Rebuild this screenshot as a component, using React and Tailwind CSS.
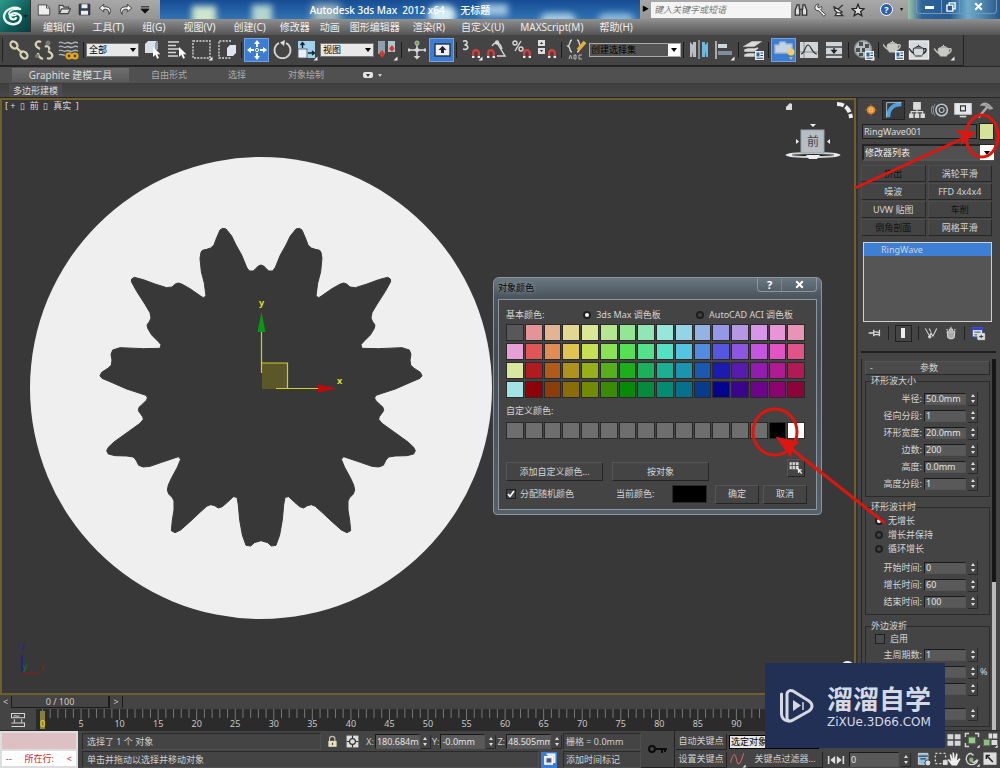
import { useState } from "react";

const rows = [
  ["#585858", "#e39497", "#e3b493", "#e3d794", "#d9e797", "#b5e692", "#92e695", "#92e6b5", "#96e6da", "#95d4e6", "#94b3e5", "#9698e7", "#b597e6", "#d796e7", "#e795d6", "#e695b4"],
  ["#e5a0d8", "#e05656", "#e08c54", "#e0c452", "#c5e153", "#8ae254", "#55e153", "#55e18a", "#56e1c5", "#54c4e2", "#548be2", "#5657e0", "#8c56e1", "#c455e0", "#e154c3", "#e1548a"],
  ["#d8e69f", "#b01b1f", "#b15b1b", "#ad921b", "#96b01b", "#57b01b", "#1bb01b", "#1bb05a", "#1bb094", "#1b94b0", "#1b58b0", "#1c1bb0", "#571bb0", "#931bb0", "#b01b93", "#b01b56"],
  ["#a0e4e4", "#8b0308", "#8b3e0a", "#8a6d08", "#708b05", "#3a8b05", "#058b05", "#058b3b", "#058b72", "#05718b", "#053c8b", "#05058b", "#38058b", "#6d058b", "#8b056f", "#8b0539"],
];

const custom = [...Array(14).fill("#6e6e6e"), "#000000", "#ffffff"];

// left half of the ring's inner outline, the right half is the mirror of it
const half = [
  [513,165],[505,168],[497,176],[490,183],[478,183],[470,172],[455,135],[438,105],[425,78],[408,57],[398,55],[390,60],[378,88],[372,105],[362,114],[350,118],[337,121],[333,127],[330,145],[334,185],[343,220],[348,258],[340,263],[333,259],[300,236],[275,222],[265,219],[256,222],[246,231],[230,233],[195,222],[160,209],[133,202],[125,207],[124,215],[140,244],[165,283],[180,308],[183,324],[178,335],[171,345],[173,355],[185,375],[205,395],[213,404],[210,415],[160,416],[90,413],[68,420],[63,433],[66,450],[64,465],[55,474],[35,487],[30,497],[36,505],[60,515],[110,537],[150,550],[168,556],[172,563],[170,570],[158,582],[147,592],[145,602],[152,612],[158,620],[160,628],[150,640],[115,665],[72,696],[55,712],[50,722],[55,732],[75,737],[110,738],[130,741],[138,750],[146,766],[160,771],[180,769],[215,757],[265,740],[272,748],[262,772],[245,803],[235,825],[232,840],[236,852],[247,863],[252,873],[252,900],[247,930],[244,962],[255,968],[272,960],[300,935],[330,907],[350,889],[362,884],[374,887],[385,894],[397,890],[412,877],[430,860],[441,862],[445,885],[449,930],[457,975],[468,1006],[482,1008],[493,998],[513,992],
];
const outline = [...half, ...half.slice().reverse().map(([x, y]) => [1026 - x, y])].map((p) => p.join(",")).join(" ");

const Svg = ({ children, size = 22, className = "" }) => (
  <svg width={size} height={size} viewBox="0 0 22 22" fill="none" stroke="#d6d6d6" strokeWidth="1.4" className={"shrink-0 " + className}>
    {children}
  </svg>
);

const Magnet = ({ x = 11, y = 11 }) => (
  <g transform={`translate(${x} ${y})`}>
    <path d="M1.2 8V4a2.8 2.8 0 0 1 5.6 0v4" stroke="#d8403c" strokeWidth="2.2" />
    <path d="M0 8h2.4M5.600 8H8" stroke="#eee" strokeWidth="2" />
  </g>
);
const Corner = () => <path d="M21.500 17.500v4h-4z" fill="#eee" stroke="none" />;
const Page = ({ x = 12, y = 12 }) => (
  <g transform={`translate(${x} ${y})`} stroke="none">
    <rect width="9" height="9" fill="#e6eef6" />
    <rect x="1.500" y="1.500" width="3" height="4" fill="#2c66a8" />
    <path d="M5.500 2h2.500M5.500 4.500h2.500M1.500 7.200h6.500" stroke="#345" strokeWidth="1" />
  </g>
);
const Pot = ({ dark }) => (
  <g fill={dark ? "none" : "#c9c9c4"} stroke={dark ? "#222" : "#c9c9c4"} strokeWidth="1">
    <path d="M6 9h9c1.600 2.500 1 6-1.500 8h-6C5 15 4.500 11.500 6 9z" />
    <path d="M5.500 14C3 13 2.500 11 1 9.500M15.500 10c3-1.500 4 1.500.2 4.500" fill="none" strokeWidth="1.400" />
    <path d="M7.500 8.500c1-1.500 5-1.500 6 0M10.500 7V5.800" />
  </g>
);
const Cursor = ({ x = 0, y = 0 }) => <path transform={`translate(${x} ${y})`} d="M0 0v10l2.400-2.200 1.800 4 1.800-.8-1.800-3.800h3.200z" fill="#fff" stroke="none" />;

const Tool = ({ label, on, children }) => (
  <button aria-label={label} className={"flex h-6 w-[25px] shrink-0 items-center justify-center " + (on ? "border border-[#6fa3e3] bg-[#3d7cd0]" : "")}>
    <Svg>{children}</Svg>
  </button>
);
const Sep = () => <i className="mx-[2px] h-4 w-px shrink-0 bg-[#1c1c1c]" />;

const Header = () => (
  <header className="relative shrink-0">
    <div className="flex h-[19px] items-stretch bg-[linear-gradient(90deg,#1e4f94,#2d6fb5_30%,#3f86c4_45%,#1c4f95_75%,#2a66a8)]">
      <div className="flex w-[160px] shrink-0 items-center gap-[7px] bg-gradient-to-b from-[#a8a8a8] to-[#959595] pl-[37px]">
        <Svg size={14}><path d="M2 3h13l5 5v11H2z" fill="#eee" stroke="#444" /><path d="M15 3v5h5" stroke="#444" /></Svg>
        <Svg size={13}><path d="M2 18V4h6l2 3h8v3M2 18l4-8h15l-4 8z" fill="#ddd" stroke="#444" strokeWidth="2" /></Svg>
        <Svg size={13}><path d="M2 2h18v18H2z" fill="#334050" stroke="#223" /><path d="M6 2h10v7H6zM5 13h12v7H5z" fill="#eee" stroke="none" /></Svg>
        <Svg size={14}><path d="M9 2 2 8l7 6v-4c6-1 9 2 8 8 5-6 3-13-8-12z" fill="#f0f0f0" stroke="#333" /></Svg>
        <Svg size={14}><path d="m13 2 7 6-7 6v-4c-6-1-9 2-8 8C0 12 2 5 13 6z" fill="#f0f0f0" stroke="#333" /></Svg>
        <Svg size={10}><path d="M2 4h18M2 9h18l-9 9z" fill="#111" stroke="#111" strokeWidth="2" /></Svg>
      </div>
      <div className="relative flex min-w-0 flex-1 items-center justify-center overflow-hidden bg-[linear-gradient(180deg,#164c93,#3173b4)]">
        <i className="absolute top-[6px] left-8 h-5 w-6 bg-[#cfe6cd] blur-[3px]" />
        <i className="absolute top-[5px] left-[92px] h-5 w-5 bg-[#b5d5cf] blur-[3px]" />
        <i className="absolute top-[4px] left-[152px] h-5 w-7 bg-[#9fb8bb] blur-[4px]" />
        <i className="absolute top-[5px] left-[268px] h-5 w-7 rounded-full bg-[#d5edf5] blur-[3px]" />
        <i className="absolute top-[4px] left-[320px] h-3 w-7 bg-[#9cc4df] blur-[3px]" />
        <i className="absolute top-[13px] left-[380px] h-4 w-9 rounded-full bg-[#a5cbe2] blur-[3px]" />
        <i className="absolute top-[13px] left-[438px] h-4 w-9 rounded-full bg-[#88b8d9] blur-[3px]" />
        <h1 className="relative text-[10px] leading-4 font-medium whitespace-pre text-white">Autodesk 3ds Max  2012 x64      无标题</h1>
      </div>
      <div className="flex shrink-0 items-center bg-gradient-to-b from-[#a8a8a8] to-[#959595]">
        <span className="w-[11px] text-center text-[7px] text-black">▶</span>
        <input aria-label="搜索" placeholder="键入关键字或短语" className="h-[16px] w-[140px] bg-[#f4f4f4] px-[3px] text-[9px] italic placeholder:text-[#777]" />
        <div className="flex items-center gap-[5px] px-[3px]">
          <Svg size={14}><path d="M5 3h3v5l1 3v8H2v-8zM17 3h-3v5l-1 3v8h7v-8zM9 10h4" fill="#ddd" stroke="#333" strokeWidth="2" /></Svg>
          <Svg size={14}><path d="M3 7a5 5 0 0 1 6-5L7 6l3 2 3-3c2 3 0 5-1 6l8 7-3 3-8-9c-4 1-6-2-6-5z" fill="#eee" stroke="#333" /></Svg>
          <Svg size={14}><path d="M3 6c1 8 7 12 13 8zM9 10l8-7M8 14l-3 6h12l-5-5" fill="#eee" stroke="#333" strokeWidth="2" /></Svg>
          <Svg size={14}><path d="m11 2 2.600 6.500 7 .5-5.400 4.400L17 20l-6-3.700L5 20l1.800-6.600L1.400 9l7-.5z" fill="#ddd" stroke="#222" strokeWidth="2" /></Svg>
        </div>
        <button aria-label="帮助" className="mr-[7px] ml-[12px] h-[13px] w-[13px] rounded-full border border-white bg-[#2c5fae] text-[9px] leading-[11px] font-bold text-white">?</button>
        <span className="w-[8px] text-[6px] text-black">▾</span>
      </div>
      <div className="flex w-[92px] shrink-0 items-start justify-end bg-[linear-gradient(90deg,#9cc3a7,#2e6597_15%,#255b91_45%,#6faccb_65%,#28578b)] pr-[3px] text-white">
        <button aria-label="最小化" className="flex h-[14px] w-[26px] items-center justify-center rounded-bl border border-t-0 border-[#7498bd]"><i className="mt-[2px] h-[3px] w-[9px] bg-white" /></button>
        <button aria-label="还原" className="flex h-[14px] w-[17px] items-center justify-center border-b border-[#7498bd]"><Svg size={10}><path d="M7 7V2h13v13h-5M2 7h13v13H2z" stroke="#fff" strokeWidth="3" /></Svg></button>
        <button aria-label="关闭" className="flex h-[14px] w-[38px] items-center justify-center rounded-br border border-t-0 border-[#7498bd]"><Svg size={9}><path d="m3 3 16 16M19 3 3 19" stroke="#fff" strokeWidth="5" /></Svg></button>
      </div>
    </div>
    <nav className="flex h-4 items-center bg-gradient-to-b from-[#909090] to-[#555] pl-[34px] text-[10px] leading-4 text-[#eee]">
      {["编辑(E)", "工具(T)", "组(G)", "视图(V)", "创建(C)"].map((m) => <a key={m} href="#" className="px-[9px] whitespace-nowrap">{m}</a>)}
      {["修改器", "动画", "图形编辑器"].map((m) => <a key={m} href="#" className="px-[5px] whitespace-nowrap">{m}</a>)}
      {["渲染(R)", "自定义(U)", "MAXScript(M)", "帮助(H)"].map((m) => <a key={m} href="#" className="px-[8px] whitespace-nowrap">{m}</a>)}
    </nav>
    <button aria-label="应用程序" className="absolute top-0 left-0 flex h-8 w-[31px] items-center border-r border-[#333] bg-[linear-gradient(135deg,#2f9a8a,#0c5a56_60%,#0a3d40)]">
      <svg width="30" height="30" viewBox="0 0 30 30" fill="none" stroke="#eef7f4" strokeWidth="2.400" strokeLinecap="round">
        <path d="M20 8C14 5 5 8 4 15c0 6 6 9 11 8 6-1 8-8 3-10-4-2-8 0-8 3 1 3 5 3 6 1" />
        <path d="M20 8c-5 0-10 1-11 4s4 3 7 2" strokeWidth="1.600" />
        <path d="M23 14h5l-2.500 3z" fill="#072b2b" stroke="none" />
      </svg>
    </button>
  </header>
);

const selectCls = "h-[14px] shrink-0 appearance-none border border-[#777] bg-[#e8e8e8] pl-[2px] text-[9px] leading-3 text-black";
const Drop = ({ label, value, className }) => (
  <span className="relative flex shrink-0 items-center">
    <select aria-label={label} className={selectCls + " " + className}><option>{value}</option></select>
    <i className="pointer-events-none absolute right-[3px] border-x-[3px] border-t-[4px] border-x-transparent border-t-black" />
  </span>
);

const Toolbar = () => (
  <div className="flex h-[31px] w-[964px] shrink-0 items-center border-r border-b border-[#222] bg-[#444] pl-[2px]">
    <i className="mr-[3px] h-6 w-px bg-[#222]" />
    <Tool label="选择并链接"><g stroke="#d9d3b5" strokeWidth="2.200"><ellipse cx="6" cy="6" rx="4" ry="3" transform="rotate(45 6 6)" /><ellipse cx="16" cy="16" rx="4" ry="3" transform="rotate(45 16 16)" /><path d="m8 8 6 6" /></g></Tool>
    <Tool label="取消链接"><g stroke="#d9d3b5" strokeWidth="2.200"><path d="M8 3C4 1 1 5 4 8l3 2M14 19c4 2 7-2 4-5l-3-2" /><path d="M5 14c0 3 2 5 5 6M12 8c2-2 5 0 4 3" /></g><g fill="#777" stroke="none"><circle cx="15" cy="4" r="2.500" /><circle cx="4" cy="17" r="2" /></g></Tool>
    <Tool label="绑定到空间扭曲"><path d="M1 4c3-3 4 2 7 0s4 2 7 0 4 0 5 0M1 8c3-3 4 2 7 0s4 2 7 0 4 0 5 0M1 12c3-3 4 2 7 0s4 2 7 0 4 0 5 0M1 16c2-2 4 1 6 0" stroke="#aab5b5" /><circle cx="11" cy="17" r="2.500" stroke="#e8a81d" strokeWidth="2.200" /><circle cx="17" cy="17" r="2.500" stroke="#e8a81d" strokeWidth="2.200" /></Tool>
    <Sep />
    <Drop label="选择过滤器" value="全部" className="w-[53px]" />
    <Tool label="选择对象"><path d="m4 5 3-3h9l-2 3v9H4z" fill="#d7e0e6" stroke="none" /><path d="m14 5 3-3v8l-3 3z" fill="#8fa5b5" stroke="none" /><Cursor x={12} y={8} /></Tool>
    <Tool label="按名称选择"><path d="M2 3h11M2 6.500h8M2 10h11M2 13.500h8M2 17h10" /><Cursor x={13} y={8} /></Tool>
    <Tool label="选择区域"><rect x="2" y="2" width="17" height="17" strokeDasharray="2 1.200" /><Corner /></Tool>
    <Tool label="窗口/交叉"><path d="M15 2H3v17h12" strokeDasharray="2 1.200" /><path d="m11 9 3-3h6v8l-3 3h-6z" fill="#dde6ec" stroke="none" /></Tool>
    <Sep />
    <Tool label="选择并移动" on><path d="m11 1 3 4H8zM11 21l3-4H8zM1 11l4-3v6zM21 11l-4-3v6z" fill="#fff" stroke="none" /><path d="M11 5v3M11 14v3M5 11h3M14 11h3" stroke="#fff" strokeWidth="2" /><circle cx="11" cy="11" r="1.600" stroke="#fff" strokeWidth="1" /></Tool>
    <Tool label="选择并旋转"><path d="M8 4a8 8 0 1 0 7 0" strokeWidth="1.800" /><path d="m14 1-5 2.500L13 7z" fill="#ddd" stroke="none" /></Tool>
    <Tool label="选择并缩放"><rect x="2" y="2" width="17" height="17" fill="#9fd0ec" stroke="none" /><rect x="2" y="10" width="9" height="9" fill="#e8eef2" stroke="#456" strokeWidth=".8" /><path d="M6.500 9V4M4.500 6l2-2.500 2 2.500M12 14h6M16 12l2.500 2-2.500 2" stroke="#123" /><Corner /></Tool>
    <i className="w-px" />
    <Drop label="参考坐标系" value="视图" className="w-[54px]" />
    <Tool label="使用轴点中心"><rect x="2" y="2" width="7" height="13" fill="#8da0ab" stroke="none" /><rect x="12" y="2" width="7" height="11" fill="#b7c3ca" stroke="none" /><path d="m6 11 3 4-3 4-3-4zM16 6l2.500 3.500L16 13l-3-3.500z" fill="#cf3936" stroke="none" /><Corner /></Tool>
    <Sep />
    <Tool label="选择并操纵"><path d="M11 5v13M3 11h16" stroke="#ddd" /><path d="m11 9 2 2-2 2-2-2z" fill="#ddd" /><circle cx="11" cy="4" r="1.800" fill="#5f9a4f" stroke="#9ab58f" /><path d="m10 18 1 1 1-1zM3 9.500v3M19 9.500v3" strokeWidth="2" /></Tool>
    <Tool label="键盘快捷键覆盖" on><rect x="4" y="5" width="15" height="12" fill="#eef0f2" stroke="#234" /><path d="m11.500 7 4 4h-2.500v3h-3v-3H7.500z" fill="#223" stroke="none" /></Tool>
    <Sep />
    <Tool label="捕捉开关"><path d="M2 2.500c4-2.500 6 2.500 1.500 3.500 5 0 4 6-1.500 4" strokeWidth="1.600" /><Magnet x={11} y={10} /><Corner /></Tool>
    <Tool label="角度捕捉"><path d="M6 7c3-5 8-4 10 3M11 4l8 13h-8" /><circle cx="11" cy="3.500" r="1.500" fill="#ddd" /><Magnet x={1} y={10} /></Tool>
    <Tool label="百分比捕捉"><circle cx="4" cy="4" r="2" /><circle cx="10" cy="10" r="2" /><path d="m10 2-6 10" /><Magnet x={12} y={10} /></Tool>
    <Tool label="微调器捕捉"><rect x="2" y="1" width="7" height="6" fill="#ddd" stroke="none" /><rect x="2" y="9" width="7" height="6" fill="#ddd" stroke="none" /><path d="M4 5h3L5.500 3zM4 11h3l-1.500 2z" fill="#222" stroke="none" /><Magnet x={12} y={10} /></Tool>
    <Sep />
    <Tool label="编辑命名选择集"><path d="M6 1C3 1 5 6 2 7c3 1 1 6 4 6M11 1c3 0 1 5 4 6-3 1-1 6-4 6" /><path d="m19 3-7 8" stroke="#e2b13c" strokeWidth="3.500" /><path d="m3 20 1.500-4L6 20M8 16v4h2v-4zM16 16h-3v4h3" stroke="#bbb" strokeWidth="1" /></Tool>
    <span className="relative flex shrink-0 items-center">
      <select aria-label="命名选择集" className="h-[14px] w-[92px] appearance-none border border-[#aaa] bg-[#555] pl-[1px] text-[9px] leading-3 text-black"><option>创建选择集</option></select>
      <i className="pointer-events-none absolute right-[1px] flex h-3 w-3 items-center justify-center bg-white"><i className="border-x-[3px] border-t-[4px] border-x-transparent border-t-black" /></i>
    </span>
    <Sep />
    <Tool label="镜像"><path d="M2 3l3 3V3h3v15H5v-6l-1 6H2z" fill="#b8c0c5" stroke="none" /><path d="M20 3l-3 3V3h-3v15h3v-6l1 6h2z" fill="#6db9df" stroke="none" /><path d="M11 1v19" strokeWidth="1" /></Tool>
    <Tool label="对齐"><path d="M3 2v18" /><rect x="5" y="5" width="9" height="4" fill="#cfd6da" stroke="none" /><rect x="5" y="12" width="14" height="4" fill="#7d8f9d" stroke="none" /><Corner /></Tool>
    <Sep />
    <Tool label="层管理器"><path d="m2 7 7-4h8l-6 4zM2 11l3-1h7l3-1-4 3H2zM2 16l3-1h6v2H2z" fill="#ddd" /><Page /></Tool>
    <Sep />
    <Tool label="Graphite 建模工具" on><path d="M2 6h4l1-3h5l1 2h6v9H2z" fill="#c5d4e5" stroke="#a1b6cf" /><circle cx="18" cy="13" r="3.500" fill="#f2cf63" stroke="none" /><path d="M16 18h4l-2 3z" fill="#d9b057" stroke="none" /></Tool>
    <Tool label="曲线编辑器"><rect x="2" y="3" width="18" height="16" fill="#d2d6d8" stroke="none" /><path d="M6 3v16M2 13h18" stroke="#777" strokeWidth=".8" /><path d="M3 15c4 0 4-9 7-9s4 9 9 9" stroke="#333" strokeWidth="1.200" /></Tool>
    <Tool label="图解视图"><path d="M3 3h16v16H3z" fill="#cfd3d6" stroke="none" /><path d="M3 8h16M3 16h16" stroke="#444" /><path d="M11 9v4M9 11.500h4L11 14z" fill="#222" stroke="#222" /></Tool>
    <Sep />
    <Tool label="材质编辑器"><circle cx="10" cy="10" r="8.500" fill="#b7bec2" stroke="#888" /><g fill="#4a4f52" stroke="none"><path d="M6 3h4v4H6zM12 5h4v4h-4zM3 9h4v4H3zM9 9h3v4H9zM6 14h4v3H6z" /></g><Page /><Corner /></Tool>
    <Sep />
    <Tool label="渲染设置"><g transform="translate(-1 -4)"><Pot /></g><Page /></Tool>
    <Tool label="渲染帧窗口"><rect x="1.500" y="2" width="19" height="18" fill="#d5d9db" stroke="#eee" /><Pot dark /></Tool>
    <Tool label="渲染产品"><Pot /><Corner /></Tool>
  </div>
);

const Ribbon = () => (
  <div className="flex shrink-0 flex-col border-y border-[#262626] text-[9px] text-[#aaa]">
    <div className="flex h-4 items-center bg-[#505050] pl-3" role="tablist">
      <button role="tab" className="h-[14px] w-[117px] bg-gradient-to-b from-[#6e6e6e] to-[#5c5c5c] text-[10px] leading-[14px] text-[#ddd]">Graphite 建模工具</button>
      <button role="tab" className="ml-[22px]">自由形式</button>
      <button role="tab" className="ml-[41px]">选择</button>
      <button role="tab" className="ml-[42px]">对象绘制</button>
      <button aria-label="最小化" className="ml-[39px] flex h-[6px] w-[10px] items-center justify-center rounded-[2px] bg-[#e5e5e5]"><i className="border-x-2 border-t-[3px] border-x-transparent border-t-[#333]" /></button>
      <i className="ml-[5px] border-x-2 border-t-[3px] border-x-transparent border-t-[#ccc]" />
    </div>
    <div className="flex h-[14px] items-center bg-gradient-to-b from-[#3e3e3e] to-[#484848] pl-[9px]">
      <button className="h-[13px] bg-[#4c4c4c] px-1 text-[9px] leading-[13px] text-[#ddd]">多边形建模</button>
    </div>
  </div>
);

const Viewport = () => (
  <div className="relative min-h-0 flex-1 overflow-hidden border-2 border-[#6f5f2c] bg-[#383838]">
    <span className="absolute top-0 left-[3px] text-[9px] leading-3 whitespace-pre text-[#ddd]">[ +  ▯  前  ▯  真实  ]</span>
    <svg width="856" height="596" viewBox="2 100 856 596" className="block">
      <circle cx="261" cy="388" r="231" fill="#efefef" />
      <g transform="translate(90 210) scale(.33333)">
        <polygon points={outline} fill="#383838" stroke="#383838" strokeWidth="3" strokeLinejoin="round" />
      </g>
      <rect x="262" y="363" width="25" height="26" fill="#5b5728" />
      <path d="M262 363h25.500v25M261.500 373v-41M276 388.500h43" stroke="#d2cf26" strokeWidth="1.200" fill="none" />
      <path d="m261.500 312 4 20h-8z" fill="#0a9714" />
      <path d="m337 388.500-19-4v8z" fill="#c00a0a" />
      <text x="259" y="306" fontSize="9" fill="#dedb35" fontWeight="bold">y</text>
      <text x="337" y="384" fontSize="9" fill="#dedb35" fontWeight="bold">x</text>
      <path d="M22 673v-18" stroke="#1c1ca0" strokeWidth="1.500" />
      <path d="M22 673h18" stroke="#8c1c1c" />
      <text x="21" y="650" fontSize="8" fill="#1c1cb0">z</text>
      <text x="23" y="670" fontSize="8" fill="#1c7a1c">y</text>
      <text x="40" y="671" fontSize="8" fill="#8c1c1c">x</text>
      <path d="m786 107 4-4 2 1v6h-6z" fill="#ddd" />
      <path d="M837 104c8 0 13 5 14 14" stroke="#eee" strokeWidth="4" fill="none" strokeDasharray="7 2" />
      <ellipse cx="813" cy="155" rx="26" ry="2" fill="#222" stroke="#d0d4d6" strokeWidth="2" />
      <path d="m785 155 7-2v4zM841 155l-7-2v4zM806 155h14l-3 4h-8z" fill="#eee" />
      <rect x="801" y="130" width="23" height="23" fill="#b6bdc3" stroke="#9aa2a9" />
      <text x="807" y="146" fontSize="12" fill="#3f464c">前</text>
      <path d="M810 124h6l-3 3zM796 139v5l3-2.500zM830 139v5l-3-2.500z" fill="#eee" />
      <path d="M843 665c1-4 8-4 9 0" stroke="#eee" fill="none" strokeWidth="2" />
    </svg>
  </div>
);

const Swatch = ({ color }) => <button aria-label={color} className="h-[17px] border border-[#2a2a2a]" style={{ backgroundColor: color }} />;

const dlgBtn = "h-[19px] border border-t-[#555] border-r-[#242424] border-b-[#242424] border-l-[#555] bg-[#444] text-[9px] leading-4";

const ColorDialog = () => {
  const [palette, setPalette] = useState("max");
  return (
    <section role="dialog" aria-label="对象颜色" className="absolute top-[277px] left-[493px] w-[329px] rounded-t-md rounded-b-sm border border-[#8b969f] bg-[linear-gradient(180deg,#6b7780,#4a555e_8%,#434c54_30%,#55606a)] px-1 pb-1 text-[9px] leading-3 text-[#d4d4d4]">
      <div className="flex h-[21px] items-start justify-between">
        <h2 className="pt-[4px] text-[9px] text-black [text-shadow:0_0_4px_#aab4bb]">对象颜色</h2>
        <div className="flex rounded-b border border-t-0 border-[#8b969f]">
          <button aria-label="?" className="h-[13px] w-6 border-r border-[#7a858e] text-[11px] leading-3 font-bold text-white">?</button>
          <button aria-label="关闭" className="flex h-[13px] w-[34px] items-center justify-center"><Svg size={9}><path d="m3 3 16 16M19 3 3 19" stroke="#fff" strokeWidth="5" /></Svg></button>
        </div>
      </div>
      <div className="border border-[#8b969f] bg-[#444] px-[7px] pt-[7px] pb-[5px]">
        <div className="flex h-4 items-center">
          <span className="w-20">基本颜色:</span>
          {[["max", "3ds Max 调色板"], ["aci", "AutoCAD ACI 调色板"]].map(([id, name]) => (
            <label key={id} className="flex w-[117px] items-center gap-[5px] whitespace-nowrap">
              <input type="radio" name="palette" checked={palette == id} onChange={() => setPalette(id)} className="h-2 w-2 shrink-0 appearance-none rounded-full border-2 border-[#1e1e1e] bg-[#444] checked:bg-white" />
              {name}
            </label>
          ))}
        </div>
        <div className="mr-1 grid grid-cols-16 gap-x-px gap-y-[2px] pt-px">
          {rows.flat().map((c, i) => <Swatch key={i} color={c} />)}
        </div>
        <p className="pt-[7px] pb-[5px]">自定义颜色:</p>
        <div className="mr-1 grid grid-cols-16 gap-x-px">
          {custom.map((c, i) => <Swatch key={i} color={c} />)}
        </div>
        <div className="mt-5 flex h-[25px] items-start">
          <button className={dlgBtn + " mt-[3px] w-[97px]"}>添加自定义颜色...</button>
          <button className={dlgBtn + " mt-[3px] ml-[9px] w-[97px]"}>按对象</button>
          <button aria-label="按颜色选择" className="mr-1 ml-auto flex h-[18px] w-[18px] items-center justify-center border border-t-[#555] border-r-[#242424] border-b-[#242424] border-l-[#555]">
            <Svg size={14}><path d="M1 2h14v11H1z" fill="#ddd" stroke="none" /><path d="M5 2v11M10 2v11M1 7h14" stroke="#444" /><path d="m13 11 7 9M15 19v-5h5" stroke="#eee" strokeWidth="2" /></Svg>
          </button>
        </div>
        <div className="flex h-5 items-center">
          <label className="flex w-[110px] items-center gap-1">
            <span className="relative flex h-[10px] w-[10px] items-center justify-center">
              <input type="checkbox" defaultChecked className="peer absolute inset-0 appearance-none border border-[#1e1e1e] bg-[#444]" />
              <svg width="8" height="8" viewBox="0 0 8 8" className="pointer-events-none relative hidden peer-checked:block"><path d="m1 4 2 2.500L7 1" fill="none" stroke="#fff" strokeWidth="1.600" /></svg>
            </span>
            分配随机颜色
          </label>
          <span className="w-[56px]">当前颜色:</span>
          <button aria-label="当前颜色" className="h-[18px] w-[35px] border border-[#2a2a2a] bg-black" />
          <button className={dlgBtn + " ml-2 w-11"}>确定</button>
          <button className={dlgBtn + " ml-1 w-11"}>取消</button>
        </div>
      </div>
    </section>
  );
};

const Spin = () => (
  <span className="flex w-[10px] shrink-0 flex-col items-center gap-[3px] border-r border-b border-[#2a2a2a] py-[2px]">
    <button aria-label="+" className="border-x-2 border-b-[3px] border-x-transparent border-b-[#ddd]" />
    <button aria-label="-" className="border-x-2 border-t-[3px] border-x-transparent border-t-[#ddd]" />
  </span>
);

const fieldCls = "h-3 border border-t-[#1a1a1a] border-r-[#555] border-b-[#555] border-l-[#1a1a1a] bg-[#595959] pl-px text-[9px] leading-[10px] text-[#e4e4e4]";

const Field = ({ label, value, unit }) => (
  <div className="flex h-[17px] items-center gap-[2px]">
    <label className="flex flex-1 items-center justify-end gap-[2px] whitespace-nowrap">
      {label && label + ":"}
      <input aria-label={label || "值"} defaultValue={value} className={fieldCls + " w-[42px]"} />
    </label>
    <Spin />
    <span className="w-[9px]">{unit}</span>
  </div>
);

const group = "min-w-0 border border-t-[#2a2a2a] border-r-[#2a2a2a] border-b-[#2a2a2a] border-l-[#2a2a2a] pb-1";

const CommandPanel = () => {
  const [growth, setGrowth] = useState("无增长");
  return (
    <aside className="flex w-[144px] shrink-0 flex-col overflow-hidden border-l-2 border-[#333] bg-[#444] pr-1 pl-[3px] text-[9px] leading-3 text-[#d4d4d4]">
      <div className="flex h-6 items-center gap-px" role="tablist">
        <button aria-label="创建" className="flex w-[20px] justify-center"><Svg size={18}><circle cx="11" cy="11" r="4" fill="#f7c25d" stroke="#e88c31" strokeWidth="2" /><path d="M11 4v14M4 11h14" stroke="#e3893d" strokeWidth=".8" /></Svg></button>
        <button aria-label="修改" className="flex w-[23px] justify-center border border-[#222] bg-[#383838]"><Svg size={18}><path d="M4 20C4 10 10 4 20 4" stroke="#4fa0df" strokeWidth="5" /><path d="M2 20V2h18" stroke="#bdd9f0" strokeWidth="1" /></Svg></button>
        <button aria-label="层次" className="flex w-[22px] justify-center"><Svg size={18}><path d="M7 2h8v8H7zM2 16h4v4H2zM9 16h4v4H9zM16 16h4v4h-4z" fill="#ddd" /><path d="M11 10v6M4 16v-3h14v3" /></Svg></button>
        <button aria-label="运动" className="flex w-[22px] justify-center"><Svg size={18}><circle cx="13" cy="11" r="7" stroke="#b8c3c9" strokeWidth="2" /><circle cx="13" cy="11" r="3" stroke="#b8c3c9" /><path d="M5 4c-3 4-3 10 0 14M2 6c-2 3-2 7 0 10" stroke="#889" /></Svg></button>
        <button aria-label="显示" className="flex w-[22px] justify-center"><Svg size={18}><path d="M1 3h20v13H1z" fill="#e6e9eb" /><path d="M8 6h6v6H8z" stroke="#333" /><path d="M7 19h8" strokeWidth="2" /></Svg></button>
        <button aria-label="工具" className="flex w-[20px] justify-center"><Svg size={18}><path d="m3 20 11-13" stroke="#a9a9a9" strokeWidth="3" /><path d="M6 5c4-4 9-3 14 4l-3 1-7-5z" fill="#999" stroke="#aaa" /></Svg></button>
      </div>
      <div className="mt-px flex items-center gap-[2px] pr-[2px] pl-px">
        <input aria-label="名称" defaultValue="RingWave001" className="h-[15px] min-w-0 flex-1 border border-[#1c1c1c] bg-[#505050] pl-px text-[9px] text-[#ddd]" />
        <button aria-label="对象颜色" className="h-[17px] w-[15px] border border-[#222] bg-[#d5e39a]" />
      </div>
      <div className="relative mt-1 mr-[2px] flex items-center pl-px">
        <select aria-label="修改器列表" className="h-[17px] w-full appearance-none border-2 border-[#242424] border-r-[#555] border-b-[#555] bg-[#505050] pl-px text-[9px] text-[#eee]"><option>修改器列表</option></select>
        <i className="pointer-events-none absolute right-0 flex h-[15px] w-[14px] items-center justify-center bg-white"><i className="border-x-[3px] border-t-[4px] border-x-transparent border-t-black" /></i>
      </div>
      <div className="mt-1 mr-1 grid grid-cols-2 gap-x-[2px] gap-y-px">
        {[["挤出", 0], ["涡轮平滑", 1], ["噪波", 1], ["FFD 4x4x4", 1], ["UVW 贴图", 1], ["车削", 0], ["倒角剖面", 0], ["网格平滑", 1]].map(([n, ok]) => (
          <button key={n} className={"h-[17px] border border-t-[#4d4d4d] border-r-[#262626] border-b-[#262626] border-l-[#4d4d4d] leading-[14px] " + (ok ? "" : "text-[#111]")}>{n}</button>
        ))}
      </div>
      <ul className="mt-[6px] mr-1 ml-[2px] h-[80px] shrink-0 border border-[#d0d0d0] bg-[#555]">
        <li className="bg-[#3d7fd4] pl-[17px] leading-[13px]">RingWave</li>
      </ul>
      <div className="flex h-[22px] items-center justify-between pr-[10px] pl-[7px]">
        <Svg size={14}><path d="M1 11h8M9 6v10M9 9l8 1M9 14l8-1M18 6v10" strokeWidth="2" /></Svg>
        <i className="h-[14px] w-px bg-[#222]" />
        <button aria-label="显示最终结果" className="flex h-[17px] w-[17px] items-center justify-center border border-[#222]"><i className="h-[10px] w-1 bg-[#eee]" /></button>
        <i className="h-[14px] w-px bg-[#222]" />
        <Svg size={14}><path d="m2 4 7 12 2-5 3 5 6-12M8 4l3 5" strokeWidth="1.600" /><circle cx="9" cy="17" r="2" fill="#ddd" /></Svg>
        <Svg size={14}><path d="M5 9h12l-1 9-3 2H9l-3-2zM8 8c0-5 6-5 6 0M11 1v3M4 5l2 2M18 5l-2 2" fill="#aaa" strokeWidth="1.600" /></Svg>
        <i className="h-[14px] w-px bg-[#222]" />
        <Svg size={15}><path d="M2 2h15v14H2z" fill="#dfe6ef" stroke="#3b55b5" /><path d="M2 4h15" stroke="#3b3fd0" strokeWidth="4" /><path d="M5 9h9M5 13h4" stroke="#444" /><path d="M10 11h10v9H10z" fill="#ddd" /><path d="M15 13v5M12 15.500h6" stroke="#333" /></Svg>
      </div>
      <div className="mt-[7px] flex min-h-0 flex-1 border-t-2 border-[#1f1f1f] pt-[6px]">
        <div className="min-h-0 min-w-0 flex-1 overflow-hidden border-l border-[#222] pt-[2px] pl-[3px]">
          <h3 className="flex h-[14px] items-center border border-t-[#555] border-r-[#282828] border-b-[#282828] border-l-[#555] bg-[#4a4a4a] px-1">
            <span>-</span><span className="flex-1 text-center">参数</span>
          </h3>
          <fieldset className={group}>
            <legend className="ml-[5px]">环形波大小</legend>
            <div className="pt-[3px]">
              <Field label="半径" value="50.0mm" />
              <Field label="径向分段" value="1" />
              <Field label="环形宽度" value="20.0mm" />
              <Field label="边数" value="200" />
              <Field label="高度" value="0.0mm" />
              <Field label="高度分段" value="1" />
            </div>
          </fieldset>
          <fieldset className={group + " mt-1"}>
            <legend className="ml-[5px]">环形波计时</legend>
            <div className="pt-px">
              {["无增长", "增长并保持", "循环增长"].map((g) => (
                <label key={g} className="flex h-[14px] items-center gap-[5px] pl-[9px]">
                  <input type="radio" name="growth" checked={growth == g} onChange={() => setGrowth(g)} className="h-2 w-2 appearance-none rounded-full border-2 border-[#1e1e1e] bg-[#444] checked:bg-white" />
                  {g}
                </label>
              ))}
            </div>
            <div className="pt-[3px]">
              <Field label="开始时间" value="0" />
              <Field label="增长时间" value="60" />
              <Field label="结束时间" value="100" />
            </div>
          </fieldset>
          <fieldset className={group + " mt-[5px]"}>
            <legend className="ml-[5px]">外边波折</legend>
            <label className="flex h-[14px] items-center gap-[5px] pl-[9px]">
              <input type="checkbox" className="h-[10px] w-[10px] appearance-none border border-[#1e1e1e] bg-[#4c4c4c] checked:bg-white" />
              启用
            </label>
            <Field label="主周期数" value="1" />
            <Field value="" unit="%" />
            <Field value="" />
            <div className="pt-2"><Field value="" /></div>
          </fieldset>
        </div>
        <div className="ml-[2px] flex w-1 flex-col bg-[#161616]">
          <i className="mt-auto h-[40%] bg-[#b9b9b9]" />
        </div>
      </div>
    </aside>
  );
};

const TimeBar = () => (
  <div className="shrink-0">
    <div className="flex h-[14px] items-center bg-[#444] text-[9px] leading-3 text-[#ccc]">
      <button aria-label="上一帧" className="h-3 w-3 border-r border-[#1c1c1c]">&lt;</button>
      <button className="h-3 w-[98px] border-r-2 border-b border-[#1c1c1c]">0 / 100</button>
      <button aria-label="下一帧" className="h-3 w-[13px] border-r border-[#1c1c1c]">&gt;</button>
    </div>
    <div className="flex h-[21px] items-stretch bg-[#2b2b2b]">
      <button aria-label="迷你曲线编辑器" className="flex w-9 items-center justify-center bg-[#444]">
        <Svg size={16}><path d="M2 2h18v6H2zM2 15h18v5H2M5 6c3-3 5 2 8-1M6 14v-4M16 10v4" /></Svg>
      </button>
      <svg width="820" height="21" className="block">
        <rect x="4" y="2" width="5" height="18" fill="#8f8220" />
        {Array.from({ length: 101 }, (_, i) => (
          <path key={i} d={`M${6.5 + i * 7.71} 0v${i % 5 ? 9 : 11}`} stroke="#777" />
        ))}
        {Array.from({ length: 21 }, (_, i) => (
          <text key={i} x={6.5 + i * 38.55} y="18" textAnchor="middle" fontSize="9" fill={i ? "#c8c8c8" : "#f0e34d"}>{i * 5}</text>
        ))}
      </svg>
    </div>
  </div>
);

const cell = "flex items-center border border-t-[#2a2a2a] border-r-[#505050] border-b-[#505050] border-l-[#2a2a2a]";

const Coord = ({ axis, value }) => (
  <>
    <label className="flex items-center gap-px">{axis}:<input defaultValue={value} className={fieldCls + " h-[15px] w-[45px]"} /></label>
    <Spin />
  </>
);

const StatusBar = () => (
  <footer className="flex h-[38px] shrink-0 border-t border-[#2a2a2a] bg-[#444] text-[9px] leading-3 text-[#d0d0d0]">
    <div className="flex w-[78px] shrink-0 flex-col border-2 border-[#ddd]">
      <div className="h-[16px] bg-[#dcc0c4]" />
      <div className="flex flex-1 items-center justify-between border-t-2 border-[#ddd] bg-white px-1 text-[#d01d2b]"><span>--</span><span>所在行:</span><span>&lt;</span></div>
    </div>
    <div className="ml-1 flex w-[559px] shrink-0 flex-col gap-px pt-[2px]">
      <div className="flex h-[17px] items-center gap-px">
        <div className={cell + " h-full min-w-0 flex-1 pl-1"}>选择了 1 个 对象</div>
        <Svg size={13} className="mr-[6px] ml-1"><path d="M6 10V6c0-5 9-5 9 0v4" stroke="#c9c2a2" strokeWidth="2" /><path d="M4 10h14v10H4z" fill="#e7e0c0" stroke="none" /><path d="M11 13v4" stroke="#444" strokeWidth="2" /></Svg>
        <Svg size={13} className="mr-[6px]"><path d="M1 1h20v20H1z" fill="#ddd" stroke="none" /><circle cx="11" cy="11" r="5" stroke="#333" strokeWidth="2" /><path d="M11 1v5M11 16v5M1 11h5M16 11h5" stroke="#333" strokeWidth="2" /></Svg>
        <Coord axis="X" value="180.684mm" />
        <Coord axis="Y" value="-0.0mm" />
        <Coord axis="Z" value="48.505mm" />
        <div className={cell + " h-full w-[78px] pl-[2px]"}>栅格 = 0.0mm</div>
      </div>
      <div className="flex h-[17px] items-center gap-[2px]">
        <div className={cell + " h-full min-w-0 flex-1 pl-1"}>单击并拖动以选择并移动对象</div>
        <button aria-label="时间标记" className="mr-1 flex h-[16px] w-4 items-center justify-center bg-[#3d7cd0]"><Svg size={13}><path d="M6 2h14v14h-3M3 6h13v13H3z" fill="#dde" stroke="#fff" strokeWidth="2" /><path d="M6 9h8v7H6z" fill="#4a5a70" stroke="none" /></Svg></button>
        <div className={cell + " h-full w-[78px] pl-[2px]"}>添加时间标记</div>
      </div>
    </div>
    <button aria-label="设置关键点" className="mr-px flex w-[34px] shrink-0 items-center justify-center border-r border-b border-[#222]">
      <svg width="20" height="12" viewBox="0 0 20 12" fill="none" stroke="#0c0c0c" strokeWidth="2"><circle cx="4" cy="6" r="3" /><path d="M7 6h12M14 6v4M17 6v3" /></svg>
    </button>
    <div className="flex min-w-0 flex-1 flex-col gap-px pt-[2px]">
      <div className="flex h-[17px] items-center gap-[2px]">
        <button className="h-4 w-[51px] shrink-0 border-r border-b border-[#222]">自动关键点</button>
        <select aria-label="选定对象" className="h-[14px] w-[90px] appearance-none border border-black bg-[#e6e6e6] pl-px text-[9px] text-black"><option>选定对象</option></select>
      </div>
      <div className="flex h-[17px] items-center gap-[2px]">
        <button className="h-4 w-[51px] shrink-0 border-r border-b border-[#222]">设置关键点</button>
        <Svg size={17}><path d="M2 15C6 0 8 3 10 12s5 4 9-9" stroke="#d06464" /><Corner /></Svg>
        <button className="h-4 w-[75px] shrink-0 border-r border-b border-[#222] whitespace-nowrap">关键点过滤器...</button>
        <Svg size={18} className="mx-[2px]"><path d="M2 6v10M20 6v10" strokeWidth="2" /><path d="m10 6-6 5 6 5zM12 6l6 5-6 5z" fill="#ddd" stroke="none" /></Svg>
        <input aria-label="当前帧" defaultValue="0" className={fieldCls + " h-[15px] w-[50px] shrink-0"} />
        <Spin />
        <Svg size={15} className="ml-1"><path d="M2 2h14v16H2z" fill="#8ec0e4" /><path d="M2 6h14M5 10h8" stroke="#345" strokeWidth="2" /><circle cx="16" cy="16" r="4.500" fill="#ddd" stroke="#333" /></Svg>
        <Svg size={15}><path d="M2 2h15v15H2z" strokeDasharray="3 3" strokeWidth="2" /><path d="M13 12h7v7h-7z" fill="#ddd" stroke="none" /></Svg>
      </div>
    </div>
    <div className="grid w-[54px] shrink-0 grid-cols-3 items-center">
      <Svg size={16}><path d="M2 3h8v7H2zM12 3h8v7h-8zM2 12h8v7H2zM12 12h8v7h-8z" fill="#d5d8da" stroke="none" /></Svg>
      <Svg size={16}><path d="M6 7h10v9H6z" fill="#9ec892" stroke="#47703d" /><path d="M2 7V2h5M15 2h5v5M2 15v5h5" strokeWidth="2" /><Corner /></Svg>
      <Svg size={16}><path d="M9 2h5v7H9zM15 2h6v7h-6zM13 11h8v7h-8z" fill="#ddd" stroke="none" /><path d="M2 10h9v9H2z" fill="#93bd87" stroke="#47703d" /><Corner /></Svg>
      <Svg size={16}><path d="m8 20-6-8 2-1 3 3L5 5l2-1 2 7V2h2l1 9 2-8 2 1-1 9 3-3 2 1-5 9z" fill="#eee" stroke="none" /></Svg>
      <Svg size={16}><path d="M9 3a8 8 0 1 0 10 9M9 3l4 3M9 14l5 2 4-4" strokeWidth="2" /><circle cx="10" cy="12" r="3" fill="#86b47b" stroke="none" /><Corner /></Svg>
      <Svg size={16}><path d="M2 2h18v17H2z" fill="#ddd" stroke="none" /><path d="m6 6 9 9M6 11V6h5" stroke="#222" strokeWidth="2" /></Svg>
    </div>
  </footer>
);

const Marks = () => (
  <svg width="1000" height="768" viewBox="0 0 1000 768" fill="none" stroke="#df160f" className="pointer-events-none absolute top-0 left-0">
    <path d="M855 188 964 138" strokeWidth="3" />
    <path d="m974 133-17-2 6 4-1 8z" fill="#df160f" strokeWidth="2" />
    <ellipse cx="982" cy="136" rx="16" ry="21" strokeWidth="3" />
    <path d="m885 523-96-76" strokeWidth="3" />
    <path d="m779 439 17 4-4 3-2 8z" fill="#df160f" strokeWidth="3" />
    <ellipse cx="775" cy="432" rx="22" ry="23" strokeWidth="3" />
  </svg>
);

const Brand = () => (
  <div className="absolute top-[663px] left-[765px] flex h-[85px] w-[180px] items-center gap-3 bg-[#233055] pl-[14px] text-[#d5d9e4]">
    <svg width="36" height="36" viewBox="0 0 36 36" fill="none" stroke="currentColor" strokeWidth="3" strokeLinejoin="round" className="shrink-0">
      <path d="M2.500 6v20c0 4 3 7 7 7" strokeLinecap="round" />
      <path d="M8 6c0-3 3-4 6-3l16 10c4 3 4 7 0 10L14 32c-3 2-6 1-6-2z" />
      <path d="m14 12 8 5.500-8 5.500z" fill="currentColor" stroke="none" />
      <path d="M24 14v8" strokeWidth="1.500" />
    </svg>
    <div className="flex flex-col whitespace-nowrap">
      <span className="font-['Noto_Sans_CJK_SC',sans-serif] text-[26px] leading-8 font-bold">溜溜自学</span>
      <span className="font-['DejaVu_Sans',sans-serif] text-[12px] leading-4">ZiXUe.3D66.COM</span>
    </div>
  </div>
);

const App = () => {
  return (
    <div className="relative flex h-screen w-full flex-col overflow-hidden bg-[#444] font-['Noto_Sans','Noto_Sans_CJK_SC',sans-serif]">
      <Header />
      <Toolbar />
      <Ribbon />
      <main className="flex min-h-0 flex-1">
        <div className="flex min-w-0 flex-1 flex-col">
          <Viewport />
          <TimeBar />
        </div>
        <CommandPanel />
      </main>
      <StatusBar />
      <ColorDialog />
      <Brand />
      <Marks />
    </div>
  );
};

export default App;
